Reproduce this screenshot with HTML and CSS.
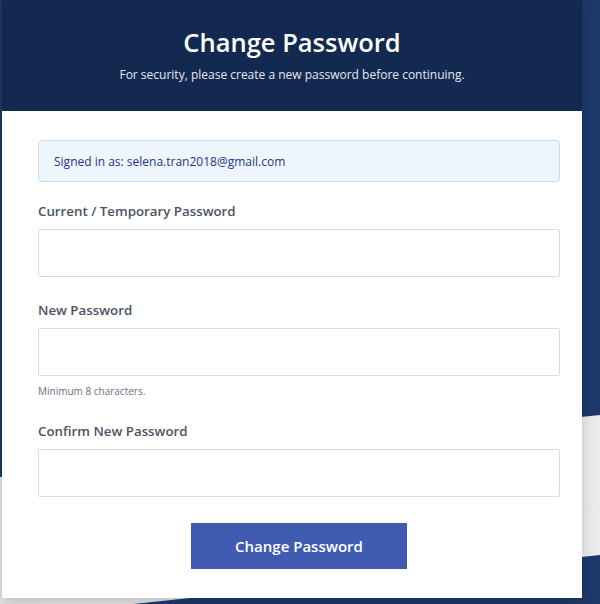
FILE: index.html
```html
<!DOCTYPE html>
<html lang="en">
<head>
<meta charset="utf-8"/>
<meta content="width=device-width, initial-scale=1.0" name="viewport"/>
<title>Change Password</title>
<link rel="stylesheet" href="styles.css">
</head>
<body>
<svg class="backdrop" viewBox="0 0 600 604" preserveAspectRatio="none" aria-hidden="true">
  <defs>
    <linearGradient id="band" x1="0" y1="0" x2="1" y2="0">
      <stop offset="0" stop-color="#e4e4e6"/>
      <stop offset="1" stop-color="#ececee"/>
    </linearGradient>
  </defs>
  <polygon points="0,477 600,415 600,555 0,618" fill="url(#band)"/>
</svg>

<div class="card">
  <div class="card-header">
    <h1>Change Password</h1>
    <p>For security, please create a new password before continuing.</p>
  </div>
  <form class="card-body" onsubmit="return false">
    <div class="signed-in">Signed in as: selena.tran2018@gmail.com</div>

    <div class="field">
      <label for="current">Current / Temporary Password</label>
      <input id="current" type="password"/>
    </div>

    <div class="field">
      <label for="newpass">New Password</label>
      <input id="newpass" type="password"/>
      <div class="hint">Minimum 8 characters.</div>
    </div>

    <div class="field">
      <label for="confirm">Confirm New Password</label>
      <input id="confirm" type="password"/>
    </div>

    <div class="actions">
      <button class="submit" type="submit">Change Password</button>
    </div>
  </form>
</div>
</body>
</html>
```
FILE: styles.css
```css
body {
  margin: 0;
  background-color: #1d386a;
  font-family: 'Open Sans', 'Noto Sans', sans-serif;
  min-height: 604px;
  position: relative;
  overflow: hidden;
}

.backdrop {
  position: absolute;
  left: 0;
  top: 0;
  width: 600px;
  height: 604px;
  z-index: 0;
}

.card {
  position: relative;
  z-index: 1;
  width: 580px;
  margin-left: 2px;
  background-color: white;
  box-shadow: 0 4px 14px rgba(0,0,0,0.18);
}

.card-header {
  background-color: #14294f;
  color: white;
  text-align: center;
  height: 111px;
  box-sizing: border-box;
  padding-top: 24px;
}

.card-header h1 {
  margin: 0;
  font-size: 25.5px;
  font-weight: 600;
  line-height: 36px;
}

.card-header p {
  margin: 6px 0 0;
  font-size: 12px;
  line-height: 18px;
  color: #e4e9f2;
}

.card-body {
  padding: 29px 22px 29px 36px;
}

.signed-in {
  background-color: #eef5fd;
  border: 1px solid #c6dbf2;
  border-radius: 4px;
  color: #23358a;
  font-size: 12px;
  font-weight: 500;
  height: 42px;
  box-sizing: border-box;
  padding: 0 15px;
  display: flex;
  align-items: center;
}

.field {
  margin-top: 19px;
}

.field + .field {
  margin-top: 23px;
}

.field label {
  display: block;
  font-size: 13.3px;
  font-weight: 600;
  color: #4a5363;
  line-height: 20px;
  margin-bottom: 8px;
}

.field input {
  display: block;
  width: 100%;
  height: 48px;
  box-sizing: border-box;
  border: 1px solid #d3dde3;
  border-radius: 2px;
  padding: 0 12px;
  font-size: 14px;
  background: white;
}

.hint {
  font-size: 10px;
  color: #667085;
  margin-top: 8px;
  line-height: 14px;
}

.actions {
  display: flex;
  justify-content: center;
  margin-top: 26px;
}

.submit {
  width: 216px;
  height: 46px;
  border: none;
  background-color: #405cb1;
  color: white;
  font-family: 'Open Sans', 'Noto Sans', sans-serif;
  font-size: 15px;
  font-weight: 600;
  cursor: pointer;
}

.submit:hover {
  background-color: #354fa0;
}
```
